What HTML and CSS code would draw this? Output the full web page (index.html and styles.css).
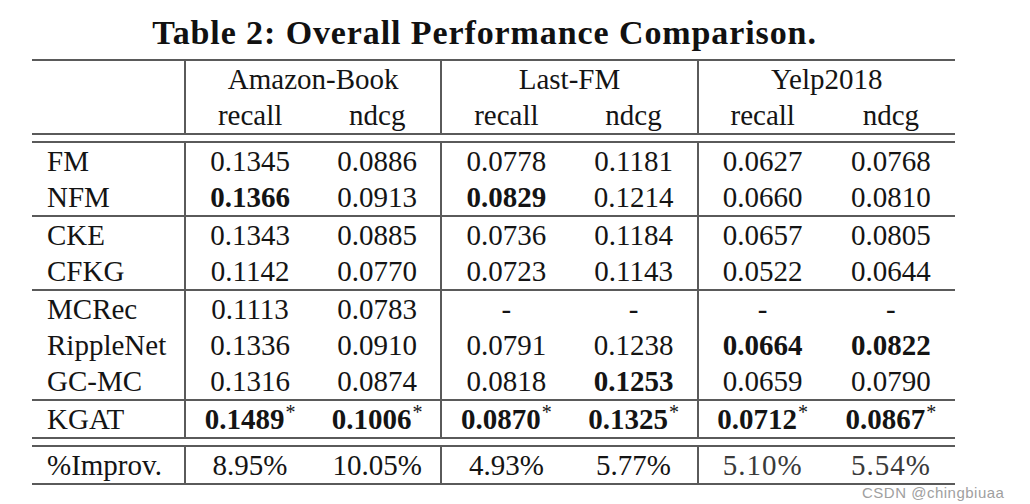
FILE: index.html
```html
<!DOCTYPE html>
<html>
<head>
<meta charset="utf-8">
<link rel="stylesheet" href="styles.css">
</head>
<body>
<div class="page">
  <h1 class="title">Table 2: Overall Performance Comparison.</h1>
  <table class="perf">
    <colgroup>
      <col class="c-label"><col class="c-num"><col class="c-num"><col class="c-num"><col class="c-num"><col class="c-num"><col class="c-num">
    </colgroup>
    <thead>
      <tr class="top">
        <th class="label vr" rowspan="2"></th>
        <th class="vr" colspan="2">Amazon-Book</th>
        <th class="vr" colspan="2">Last-FM</th>
        <th colspan="2">Yelp2018</th>
      </tr>
      <tr>
        <th>recall</th><th class="vr">ndcg</th>
        <th>recall</th><th class="vr">ndcg</th>
        <th>recall</th><th>ndcg</th>
      </tr>
    </thead>
    <tbody>
      <tr class="gap"><td colspan="7"></td></tr>
      <tr>
        <td class="label vr">FM</td>
        <td>0.1345</td><td class="vr">0.0886</td>
        <td>0.0778</td><td class="vr">0.1181</td>
        <td>0.0627</td><td>0.0768</td>
      </tr>
      <tr class="end">
        <td class="label vr">NFM</td>
        <td><b>0.1366</b></td><td class="vr">0.0913</td>
        <td><b>0.0829</b></td><td class="vr">0.1214</td>
        <td>0.0660</td><td>0.0810</td>
      </tr>
      <tr>
        <td class="label vr">CKE</td>
        <td>0.1343</td><td class="vr">0.0885</td>
        <td>0.0736</td><td class="vr">0.1184</td>
        <td>0.0657</td><td>0.0805</td>
      </tr>
      <tr class="end">
        <td class="label vr">CFKG</td>
        <td>0.1142</td><td class="vr">0.0770</td>
        <td>0.0723</td><td class="vr">0.1143</td>
        <td>0.0522</td><td>0.0644</td>
      </tr>
      <tr>
        <td class="label vr">MCRec</td>
        <td>0.1113</td><td class="vr">0.0783</td>
        <td>-</td><td class="vr">-</td>
        <td>-</td><td>-</td>
      </tr>
      <tr>
        <td class="label vr">RippleNet</td>
        <td>0.1336</td><td class="vr">0.0910</td>
        <td>0.0791</td><td class="vr">0.1238</td>
        <td><b>0.0664</b></td><td><b>0.0822</b></td>
      </tr>
      <tr class="end">
        <td class="label vr">GC-MC</td>
        <td>0.1316</td><td class="vr">0.0874</td>
        <td>0.0818</td><td class="vr"><b>0.1253</b></td>
        <td>0.0659</td><td>0.0790</td>
      </tr>
      <tr>
        <td class="label vr">KGAT</td>
        <td><b>0.1489</b><sup>*</sup></td><td class="vr"><b>0.1006</b><sup>*</sup></td>
        <td><b>0.0870</b><sup>*</sup></td><td class="vr"><b>0.1325</b><sup>*</sup></td>
        <td><b>0.0712</b><sup>*</sup></td><td><b>0.0867</b><sup>*</sup></td>
      </tr>
      <tr class="gap"><td colspan="7"></td></tr>
      <tr class="last">
        <td class="label vr">%Improv.</td>
        <td>8.95%</td><td class="vr">10.05%</td>
        <td>4.93%</td><td class="vr">5.77%</td>
        <td class="blur">5.10%</td><td class="blur">5.54%</td>
      </tr>
    </tbody>
  </table>
  <div class="watermark">CSDN @chingbiuaa</div>
</div>
</body>
</html>
```

FILE: styles.css
```css
html, body {
  margin: 0;
  padding: 0;
  background: #ffffff;
}

.page {
  position: relative;
  width: 1030px;
  height: 504px;
  overflow: hidden;
  padding-left: 32px;
  box-sizing: border-box;
  font-family: "Liberation Serif", "DejaVu Serif", serif;
  color: #141414;
}

.title {
  margin: 0;
  width: 905px;
  height: 59px;
  padding-top: 15px;
  box-sizing: border-box;
  text-align: center;
  font-size: 34px;
  line-height: 36px;
  font-weight: bold;
  letter-spacing: 0.9px;
  color: #111;
}

.perf {
  width: 923px;
  border-collapse: separate;
  border-spacing: 0;
  table-layout: fixed;
  font-size: 29px;
  border-top: 2px solid #5a5a5a;
  border-bottom: 2px solid #5a5a5a;
}

.c-label { width: 154px; }

.perf th,
.perf td {
  height: 36px;
  padding: 0;
  text-align: center;
  font-weight: normal;
  line-height: 36px;
  white-space: nowrap;
  vertical-align: middle;
}

.perf .label {
  text-align: left;
  padding-left: 15px;
}

.perf .vr {
  border-right: 2px solid #5a5a5a;
}

.perf .gap td {
  height: 6px;
  line-height: 6px;
  font-size: 0;
  border-top: 2px solid #5a5a5a;
  border-bottom: 2px solid #5a5a5a;
}

.perf tr.end td {
  border-bottom: 2px solid #5a5a5a;
}

.perf b {
  font-weight: bold;
}

.perf sup {
  font-size: 20px;
  line-height: 0;
  vertical-align: 10px;
  margin-left: 1px;
}

.perf .blur {
  color: #3a3a3a;
  letter-spacing: 1px;
}

.watermark {
  position: absolute;
  left: 862px;
  top: 485px;
  font-family: "Liberation Sans", Arial, sans-serif;
  font-size: 15px;
  line-height: 16px;
  color: #a0a0a0;
  letter-spacing: 0.5px;
  white-space: nowrap;
}
```
